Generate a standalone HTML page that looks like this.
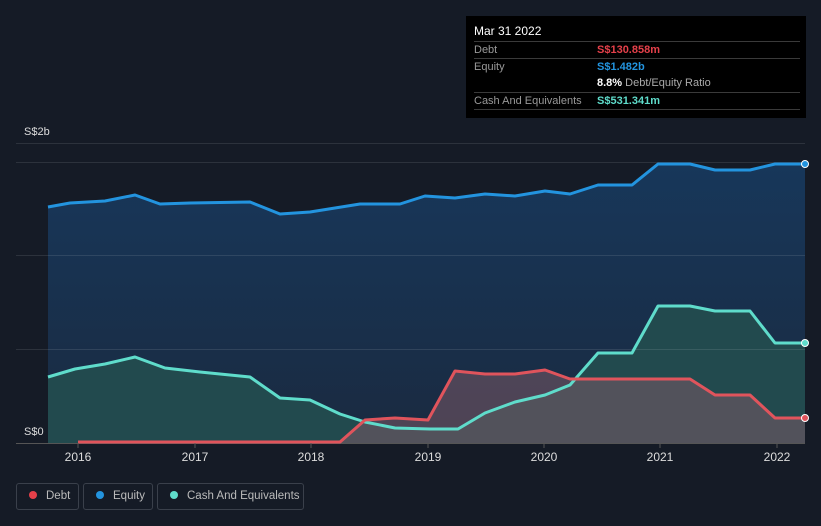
<!DOCTYPE html>
<html><head><meta charset="utf-8"><style>
body{margin:0;background:#151b26;width:821px;height:526px;overflow:hidden;font-family:"Liberation Sans",sans-serif;position:relative}
.tip{position:absolute;left:466px;top:16px;width:340px;height:102px;background:#000;}
.tip .h{position:absolute;left:8px;top:8px;color:#fff;font-size:12px}
.row{position:absolute;left:8px;width:326px;border-top:1px solid #3a3a3a;height:16px;font-size:11px;color:#999;line-height:16px}
.row span{position:absolute;left:123px;font-weight:bold}
.leg{position:absolute;top:483px;height:27px;border:1px solid #3a404b;border-radius:3px;color:#bbb;font-size:11.5px;line-height:25px;box-sizing:border-box;white-space:nowrap;overflow:hidden}
.leg i{display:inline-block;width:8px;height:8px;border-radius:50%;margin:0 9px 0 12px;vertical-align:0px}
</style></head><body>
<svg width="821" height="526" style="position:absolute;left:0;top:0">
<defs>
<linearGradient id="ge" x1="0" y1="0" x2="0" y2="1"><stop offset="0" stop-color="#17375a"/><stop offset="1" stop-color="#1a2a40"/></linearGradient>
</defs>
<path d="M48,207 L70,203 105,201 135,195 160,204 190,203 250,202 260,206 280,214 310,212 360,204 400,204 425,196 455,198 485,194 515,196 545,191 570,194 598,185 632,185 658,164 690,164 715,170 750,170 775,164 805,164 L805,443 48,443Z" fill="url(#ge)"/>
<path d="M48,377 L75,369 105,364 135,357 165,368 200,372 230,375 250,377 280,398 310,400 340,414 365,422 395,428 430,429 458,429 485,413 515,402 545,395 570,385 598,353 632,353 658,306 690,306 715,311 750,311 775,343 805,343 L805,443 48,443Z" fill="#224a4e"/>
<path d="M340,442 L365,420 395,418 428,420 455,371 485,374 515,374 545,370 570,379 690,379 715,395 750,395 775,418 805,418 L805,443 340,443Z" fill="#7a5a66" fill-opacity="0.55"/>
<g stroke="#ffffff" stroke-opacity="0.1" stroke-width="1">
<line x1="16" y1="143.5" x2="805" y2="143.5"/><line x1="16" y1="162.5" x2="805" y2="162.5"/><line x1="16" y1="255.5" x2="805" y2="255.5"/><line x1="16" y1="349.5" x2="805" y2="349.5"/>
</g>
<line x1="16" y1="443.5" x2="805" y2="443.5" stroke="#555"/>
<g fill="none" stroke-width="3" stroke-linejoin="round">
<path d="M48,207 L70,203 105,201 135,195 160,204 190,203 250,202 260,206 280,214 310,212 360,204 400,204 425,196 455,198 485,194 515,196 545,191 570,194 598,185 632,185 658,164 690,164 715,170 750,170 775,164 805,164" stroke="#2394df"/>
<path d="M48,377 L75,369 105,364 135,357 165,368 200,372 230,375 250,377 280,398 310,400 340,414 365,422 395,428 430,429 458,429 485,413 515,402 545,395 570,385 598,353 632,353 658,306 690,306 715,311 750,311 775,343 805,343" stroke="#5fdccb"/>
<path d="M78,442 L340,442 365,420 395,418 428,420 455,371 485,374 515,374 545,370 570,379 690,379 715,395 750,395 775,418 805,418" stroke="#e0545c"/>
</g>
<circle cx="805" cy="164" r="3.5" fill="#2394df" stroke="#fff" stroke-width="1"/>
<circle cx="805" cy="343" r="3.5" fill="#5fdccb" stroke="#fff" stroke-width="1"/>
<circle cx="805" cy="418" r="3.5" fill="#e0545c" stroke="#fff" stroke-width="1"/>
<g stroke="#555"><line x1="78" y1="443" x2="78" y2="448"/><line x1="195" y1="443" x2="195" y2="448"/><line x1="311" y1="443" x2="311" y2="448"/><line x1="428" y1="443" x2="428" y2="448"/><line x1="544" y1="443" x2="544" y2="448"/><line x1="660" y1="443" x2="660" y2="448"/><line x1="777" y1="443" x2="777" y2="448"/></g>
<g fill="#ddd" font-size="12" text-anchor="middle" font-family="Liberation Sans,sans-serif">
<text x="78" y="461">2016</text><text x="195" y="461">2017</text><text x="311" y="461">2018</text><text x="428" y="461">2019</text><text x="544" y="461">2020</text><text x="660" y="461">2021</text><text x="777" y="461">2022</text>
</g>
<text x="24" y="135" fill="#ddd" font-size="11" font-family="Liberation Sans,sans-serif">S$2b</text>
<text x="24" y="435" fill="#ddd" font-size="11" font-family="Liberation Sans,sans-serif">S$0</text>
</svg>
<div class="tip">
<div class="h">Mar 31 2022</div>
<div class="row" style="top:25px">Debt<span style="color:#e5404a">S$130.858m</span></div>
<div class="row" style="top:42px">Equity<span style="color:#2394df">S$1.482b</span></div>
<div class="row" style="top:59px;border-top:none"><span style="color:#fff">8.8% <b style="color:#aaa;font-weight:normal">Debt/Equity Ratio</b></span></div>
<div class="row" style="top:76px">Cash And Equivalents<span style="color:#5fdccb">S$531.341m</span></div>
<div class="row" style="top:93px;height:0"></div>
</div>
<div class="leg" style="left:16px;width:63px"><i style="background:#e5404a"></i>Debt</div>
<div class="leg" style="left:83px;width:70px"><i style="background:#2394df"></i>Equity</div>
<div class="leg" style="left:157px;width:147px"><i style="background:#5fdccb"></i>Cash And Equivalents</div>
</body></html>
